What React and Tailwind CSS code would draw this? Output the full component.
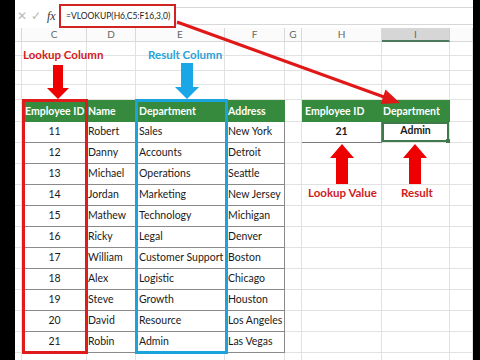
import React from "react";

const W = ["w-[7px]", "w-[65px]", "w-[49px]", "w-[89px]", "w-[60px]", "w-[17px]", "w-[80px]", "w-[68px]", "w-[23px]"];
const LIGHT = "border-r border-b border-[#e2e2e2]";

const data = [
  [11, "Robert", "Sales", "New York"],
  [12, "Danny", "Accounts", "Detroit"],
  [13, "Michael", "Operations", "Seattle"],
  [14, "Jordan", "Marketing", "New Jersey"],
  [15, "Mathew", "Technology", "Michigan"],
  [16, "Ricky", "Legal", "Denver"],
  [17, "William", "Customer Support", "Boston"],
  [18, "Alex", "Logistic", "Chicago"],
  [19, "Steve", "Growth", "Houston"],
  [20, "David", "Resource", "Los Angeles"],
  [21, "Robin", "Admin", "Las Vegas"],
];

function Row({ h, cells }) {
  return (
    <div className={`flex ${h}`}>
      {W.map((w, i) => {
        const c = cells[i] || {};
        return (
          <div key={i} className={`${w} shrink-0 flex overflow-visible whitespace-nowrap ${c.base || "items-end pb-[2px]"} ${c.cls || LIGHT}`}>
            {c.content}
          </div>
        );
      })}
    </div>
  );
}

const DARK = "border-b border-[#8a8a8a]";
const GREEN = "bg-[#358a3d] text-white font-bold";

export default function App() {
  return (
    <div className="w-[480px] h-[360px] overflow-hidden flex bg-black" style={{ fontFamily: "Lato, 'Open Sans', sans-serif" }}>
      <div className="w-[15px] shrink-0 bg-black" />
      <div className="relative w-[458px] shrink-0 bg-white overflow-hidden">
        {/* formula bar */}
        <div className="flex h-[28px] items-start">
          <div className="w-[44px] h-full flex items-center pt-[4px] text-[12px]">
            <span className="ml-[2px] text-[#b8b8b8]">✕</span>
            <span className="ml-[4px] text-[#b8b8b8]">✓</span>
            <span className="ml-[6px] text-[#333] italic" style={{ fontFamily: "'Liberation Serif', serif" }}>fx</span>
          </div>
          <div className="mt-[4px] w-[117px] h-[24px] border-2 border-[#d22323] flex items-center pl-[5px] text-[8.5px] text-[#222]">
            =VLOOKUP(H6,C5:F16,3,0)
          </div>
          <div className="flex-1 mt-[7px] h-[18px] border-y border-[#d8d8d8]" />
        </div>
        {/* column headers */}
        <div className="flex h-[14px] text-[10px] text-[#666]">
          {["", "C", "D", "E", "F", "G", "H", "I", ""].map((l, i) => (
            <div
              key={i}
              className={`${W[i]} shrink-0 flex items-center justify-center ${
                l === "I" ? "bg-[#d6d6d6] border-b-2 border-b-[#4d7a5a] border-r border-r-[#cfcfcf]" : "border-r border-b border-[#d9d9d9] bg-[#fbfbfb]"
              }`}
            >
              {l}
            </div>
          ))}
        </div>
        {/* blank upper rows */}
        <Row h="h-[14px]" cells={[]} />
        <Row h="h-[15px]" cells={[]} />
        <Row h="h-[14px]" cells={[]} />
        <Row h="h-[15px]" cells={[]} />
        {/* header */}
        <Row
          h="h-[22px] text-[10.5px]"
          cells={[
            {},
            { content: <span className="pl-[3px]">Employee ID</span>, cls: GREEN },
            { content: <span className="pl-[1px]">Name</span>, cls: GREEN },
            { content: <span className="pl-[3px]">Department</span>, cls: GREEN },
            { content: <span className="pl-[3px]">Address</span>, cls: GREEN },
            {},
            { content: <span className="pl-[3px]">Employee ID</span>, cls: GREEN },
            { content: <span className="pl-[1px]">Department</span>, cls: GREEN },
            {},
          ]}
        />
        {data.map((r, idx) => (
          <Row
            key={idx}
            h="h-[21px] text-[10.5px] text-[#1a1a1a]"
            cells={[
              {},
              { content: <span className="w-full text-center">{r[0]}</span>, cls: DARK },
              { content: <span className="pl-[1px]">{r[1]}</span>, cls: DARK },
              { content: <span className="pl-[3px]">{r[2]}</span>, cls: DARK },
              { content: <span className="pl-[3px]">{r[3]}</span>, cls: `${DARK} border-r` },
              {},
              idx === 0
                ? { content: <span className="w-full text-center font-bold">21</span>, cls: "border-b border-r border-[#7a7a7a]" }
                : {},
              idx === 0
                ? {
                    base: "items-stretch",
                    content: (
                      <span className="relative w-full flex items-end pb-[1px] justify-center font-bold border-2 border-[#3f7a4c]">
                        Admin
                        <span className="absolute right-[-3px] bottom-[-3px] w-[4px] h-[4px] bg-[#3f7a4c]" />
                      </span>
                    ),
                    cls: "",
                  }
                : {},
              {},
            ]}
          />
        ))}
        <Row h="h-[21px]" cells={[]} />

        {/* annotation boxes */}
        <div className="absolute left-[7px] top-[99px] w-[66px] h-[255px] border-[3px] border-[#e01b1b]" />
        <div className="absolute left-[120px] top-[99px] w-[93px] h-[255px] border-[3px] border-[#1ba3dc]" />

        {/* labels */}
        <div className="absolute left-[8px] top-[46px] text-[11.5px] font-bold text-[#d01c1c]">Lookup Column</div>
        <div className="absolute left-[133px] top-[46px] text-[11.5px] font-bold text-[#2aa2d8]">Result Column</div>
        <div className="absolute left-[293px] top-[184px] text-[11.5px] font-bold text-[#d01c1c]">Lookup Value</div>
        <div className="absolute left-[386px] top-[184px] text-[11.5px] font-bold text-[#d01c1c]">Result</div>

        {/* arrows */}
        <svg className="absolute inset-0 pointer-events-none" width="458" height="360">
          <polygon points="38,65 48,65 48,88 54,88 43,99 32,88 38,88" fill="#ee0000" />
          <polygon points="166,63 178,63 178,87 184,87 172,99 160,87 166,87" fill="#1aa7e8" />
          <polygon points="327,144 339,158 333,158 333,184 321,184 321,158 315,158" fill="#ee0000" />
          <polygon points="400,144 412,158 406,158 406,184 394,184 394,158 388,158" fill="#ee0000" />
          <line x1="162" y1="22" x2="369" y2="97" stroke="#e01818" strokeWidth="3" />
          <polygon points="385,103 365.7,104 370.5,89.5" fill="#e01818" />
        </svg>
      </div>
      <div className="flex-1 bg-black" />
    </div>
  );
}
